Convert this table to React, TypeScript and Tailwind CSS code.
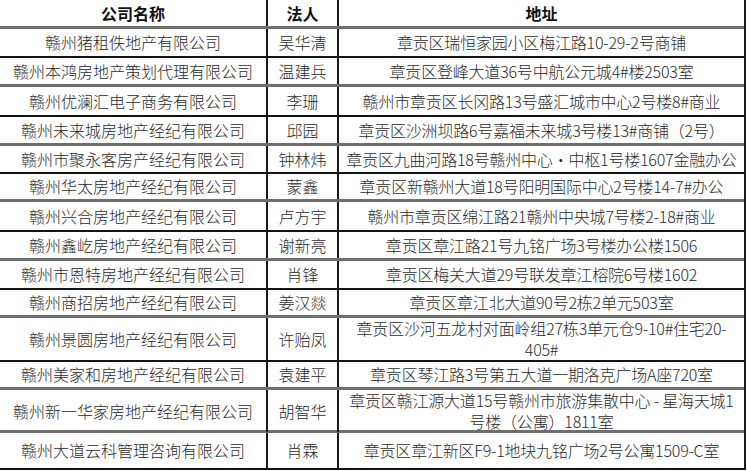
type Row = {
  name: string;
  person: string;
  address: string[];
  h: string;
  line: "gray" | "dark";
};

const rows: Row[] = [
  { name: "赣州猪租佚地产有限公司", person: "吴华清", address: ["章贡区瑞恒家园小区梅江路10-29-2号商铺"], h: "h-[29px]", line: "dark" },
  { name: "赣州本鸿房地产策划代理有限公司", person: "温建兵", address: ["章贡区登峰大道36号中航公元城4#楼2503室"], h: "h-[29px]", line: "gray" },
  { name: "赣州优澜汇电子商务有限公司", person: "李珊", address: ["赣州市章贡区长冈路13号盛汇城市中心2号楼8#商业"], h: "h-[30px]", line: "dark" },
  { name: "赣州未来城房地产经纪有限公司", person: "邱园", address: ["章贡区沙洲坝路6号嘉福未来城3号楼13#商铺（2号）"], h: "h-[29px]", line: "gray" },
  { name: "赣州市聚永客房产经纪有限公司", person: "钟林炜", address: ["章贡区九曲河路18号赣州中心・中枢1号楼1607金融办公"], h: "h-[28px]", line: "dark" },
  { name: "赣州华太房地产经纪有限公司", person: "蒙鑫", address: ["章贡区新赣州大道18号阳明国际中心2号楼14-7#办公"], h: "h-[28px]", line: "gray" },
  { name: "赣州兴合房地产经纪有限公司", person: "卢方宇", address: ["赣州市章贡区绵江路21赣州中央城7号楼2-18#商业"], h: "h-[30px]", line: "dark" },
  { name: "赣州鑫屹房地产经纪有限公司", person: "谢新亮", address: ["章贡区章江路21号九铭广场3号楼办公楼1506"], h: "h-[29px]", line: "gray" },
  { name: "赣州市恩特房地产经纪有限公司", person: "肖锋", address: ["章贡区梅关大道29号联发章江榕院6号楼1602"], h: "h-[29px]", line: "dark" },
  { name: "赣州商招房地产经纪有限公司", person: "姜汉燚", address: ["章贡区章江北大道90号2栋2单元503室"], h: "h-[28px]", line: "gray" },
  { name: "赣州景圆房地产经纪有限公司", person: "许贻凤", address: ["章贡区沙河五龙村对面岭组27栋3单元仓9-10#住宅20-", "405#"], h: "h-[44px]", line: "dark" },
  { name: "赣州美家和房地产经纪有限公司", person: "袁建平", address: ["章贡区琴江路3号第五大道一期洛克广场A座720室"], h: "h-[28px]", line: "gray" },
  { name: "赣州新一华家房地产经纪有限公司", person: "胡智华", address: ["章贡区赣江源大道15号赣州市旅游集散中心 - 星海天城1", "号楼（公寓）1811室"], h: "h-[43px]", line: "gray" },
  { name: "赣州大道云科管理咨询有限公司", person: "肖霖", address: ["章贡区章江新区F9-1地块九铭广场2号公寓1509-C室"], h: "h-[37px]", line: "dark" },
];

const cell = "flex flex-col items-center justify-center whitespace-nowrap";

export default function App() {
  return (
    <div className="w-[747px] h-[471px] bg-white text-[16px] leading-[21px] font-light text-[#2a2a2a] font-['Noto_Sans_CJK_SC','Noto_Sans_CJK_JP',sans-serif]">
      <div className="w-[746px] border-r-2 border-[#1a1a1a]">
        <div className="grid grid-cols-[268px_71px_1fr] h-[29px] border-b-[3px] border-[#6e6e6e] font-bold text-[#111]">
          <div className={`${cell} border-r-2 border-[#1a1a1a]`}>公司名称</div>
          <div className={`${cell} border-r-2 border-[#1a1a1a]`}>法人</div>
          <div className={cell}>地址</div>
        </div>
        {rows.map((r) => (
          <div
            key={r.name}
            className={`grid grid-cols-[268px_71px_1fr] ${r.h} ${
              r.line === "gray" ? "border-b-[3px] border-[#6e6e6e]" : "border-b-2 border-[#141414]"
            }`}
          >
            <div className={`${cell} border-r-2 border-[#1a1a1a]`}>{r.name}</div>
            <div className={`${cell} border-r-2 border-[#1a1a1a]`}>{r.person}</div>
            <div className={`${cell} tracking-[-0.2px]`}>
              {r.address.map((a) => (
                <span key={a}>{a}</span>
              ))}
            </div>
          </div>
        ))}
      </div>
    </div>
  );
}
